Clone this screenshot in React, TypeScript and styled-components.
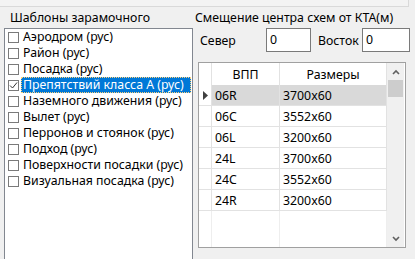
import React from "react";
import styled, { createGlobalStyle } from "styled-components";

const Global = createGlobalStyle`
  html, body { margin: 0; padding: 0; background: #f0f0f0; }
  body { font-family: "Noto Sans", "Segoe UI", sans-serif; font-size: 12.3px; color: #000; }
`;

const Window = styled.div`
  width: 415px;
  height: 259px;
  overflow: hidden;
  background: #f0f0f0;
  display: flex;
  flex-direction: column;
`;

const TopPanel = styled.div`
  width: 408px;
  height: 6px;
  flex: none;
  background: #f3f3f3;
  border-bottom: 1px solid #d9d9d9;
  border-right: 1px solid #d9d9d9;
`;

const Main = styled.div`
  display: flex;
  flex: 1;
  min-height: 0;
`;

const LeftColumn = styled.div`
  width: 189px;
  margin-left: 4px;
  display: flex;
  flex-direction: column;
`;

const GroupLabel = styled.div<{ $indent: number }>`
  height: 16px;
  line-height: 16px;
  margin-top: 3px;
  padding-left: ${(p) => p.$indent}px;
  white-space: nowrap;
`;

const ListBox = styled.div`
  margin-top: 2px;
  flex: 1;
  background: #fff;
  border: 1px solid #828790;
  border-bottom: none;
  display: flex;
  flex-direction: column;
`;

const ListItem = styled.div`
  height: 16px;
  display: flex;
  align-items: center;
  padding-left: 3px;
`;

const Box = styled.span`
  width: 11px;
  height: 11px;
  flex: none;
  box-sizing: border-box;
  border: 1px solid #7a7a7a;
  background: #fff;
  display: flex;
  align-items: center;
  justify-content: center;
`;

const ItemText = styled.span<{ $selected?: boolean }>`
  margin-left: 2px;
  padding: 0 2px;
  height: 16px;
  line-height: 16px;
  flex: 1;
  white-space: nowrap;
  box-sizing: border-box;
  background: ${(p) => (p.$selected ? "#0078d7" : "transparent")};
  color: ${(p) => (p.$selected ? "#fff" : "#000")};
  outline: ${(p) => (p.$selected ? "1px dotted #ffd27a" : "none")};
  outline-offset: -1px;
  margin-right: 1px;
`;

const RightColumn = styled.div`
  flex: 1;
  display: flex;
  flex-direction: column;
  padding-left: 2px;
`;

const FieldRow = styled.div`
  display: flex;
  align-items: center;
  margin-top: 2px;
  height: 24px;
  padding-left: 5px;
`;

const FieldLabel = styled.span<{ $width: number; $pad?: number }>`
  width: ${(p) => p.$width}px;
  padding-left: ${(p) => p.$pad ?? 0}px;
  flex: none;
  white-space: nowrap;
`;

const Input = styled.div<{ $width: number }>`
  width: ${(p) => p.$width}px;
  height: 24px;
  box-sizing: border-box;
  border: 1px solid #7a7a7a;
  background: #fff;
  padding-left: 3px;
  line-height: 22px;
  flex: none;
`;

const Grid = styled.div`
  margin: 10px 0 0 3px;
  width: 206px;
  height: 184px;
  border: 1px solid #a0a0a0;
  background: #fff;
  display: flex;
`;

const Table = styled.div`
  flex: 1;
  display: grid;
  grid-template-columns: 13px 68px 107px;
  grid-template-rows: 22px;
  grid-auto-rows: 21px;
  align-content: start;
`;

const Cell = styled.div<{ $head?: boolean; $sel?: boolean; $rowHead?: boolean }>`
  box-sizing: border-box;
  border-right: 1px solid #e2e2e2;
  border-bottom: ${(p) => (p.$head ? "none" : "1px solid #e2e2e2")};
  background: ${(p) => (p.$sel ? "#d9d9d9" : "#fff")};
  display: flex;
  align-items: center;
  justify-content: ${(p) => (p.$head || p.$rowHead ? "center" : "flex-start")};
  padding-left: ${(p) => (p.$head || p.$rowHead ? 0 : 3)}px;
  white-space: nowrap;
`;

const Filler = styled.div`
  grid-column: 1 / 4;
  height: 36px;
  display: grid;
  grid-template-columns: 13px 68px 107px;
`;

const FillerCol = styled.div`
  border-right: 1px solid #eeeeee;
`;

const Scrollbar = styled.div`
  width: 17px;
  margin-right: 1px;
  background: #f0f0f0;
  display: flex;
  flex-direction: column;
  align-items: center;
`;

const Arrow = styled.div`
  height: 17px;
  width: 17px;
  display: flex;
  align-items: center;
  justify-content: center;
`;

const Thumb = styled.div`
  width: 15px;
  height: 17px;
  background: #cdcdcd;
`;

const Spacer = styled.div`
  flex: 1;
`;

const items = [
  "Аэродром (рус)",
  "Район (рус)",
  "Посадка (рус)",
  "Препятствий класса А (рус)",
  "Наземного движения (рус)",
  "Вылет (рус)",
  "Перронов и стоянок (рус)",
  "Подход (рус)",
  "Поверхности посадки (рус)",
  "Визуальная посадка (рус)",
];

const rows = [
  ["06R", "3700x60"],
  ["06C", "3552x60"],
  ["06L", "3200x60"],
  ["24L", "3700x60"],
  ["24C", "3552x60"],
  ["24R", "3200x60"],
];

export default function App() {
  return (
    <Window>
      <Global />
      <TopPanel />
      <Main>
        <LeftColumn>
          <GroupLabel $indent={6}>Шаблоны зарамочного</GroupLabel>
          <ListBox>
            {items.map((t, i) => (
              <ListItem key={t}>
                <Box>
                  {i === 3 && (
                    <svg width="9" height="9" viewBox="0 0 9 9">
                      <path d="M1 4.5 L3.5 7 L8 1.5" fill="none" stroke="#333" strokeWidth="1" />
                    </svg>
                  )}
                </Box>
                <ItemText $selected={i === 3}>{t}</ItemText>
              </ListItem>
            ))}
          </ListBox>
        </LeftColumn>
        <RightColumn>
          <GroupLabel $indent={0}>Смещение центра схем от КТА(м)</GroupLabel>
          <FieldRow>
            <FieldLabel $width={66}>Север</FieldLabel>
            <Input $width={45}>0</Input>
            <FieldLabel $width={44} $pad={7}>Восток</FieldLabel>
            <Input $width={48}>0</Input>
          </FieldRow>
          <Grid>
            <Table>
              <Cell $head />
              <Cell $head>ВПП</Cell>
              <Cell $head>Размеры</Cell>
              {rows.map((r, i) => (
                <React.Fragment key={r[0]}>
                  <Cell $rowHead>
                    {i === 0 && (
                      <svg width="5" height="9" viewBox="0 0 5 9">
                        <path d="M0 0 L5 4.5 L0 9 Z" fill="#404040" />
                      </svg>
                    )}
                  </Cell>
                  <Cell $sel={i === 0}>{r[0]}</Cell>
                  <Cell $sel={i === 0}>{r[1]}</Cell>
                </React.Fragment>
              ))}
              <Filler>
                <FillerCol />
                <FillerCol />
                <FillerCol />
              </Filler>
            </Table>
            <Scrollbar>
              <Arrow>
                <svg width="8" height="6" viewBox="0 0 8 6">
                  <path d="M1 5 L4 2 L7 5" fill="none" stroke="#606060" strokeWidth="1.6" />
                </svg>
              </Arrow>
              <Thumb />
              <Spacer />
              <Arrow>
                <svg width="8" height="6" viewBox="0 0 8 6">
                  <path d="M1 1 L4 4 L7 1" fill="none" stroke="#606060" strokeWidth="1.6" />
                </svg>
              </Arrow>
            </Scrollbar>
          </Grid>
        </RightColumn>
      </Main>
    </Window>
  );
}
